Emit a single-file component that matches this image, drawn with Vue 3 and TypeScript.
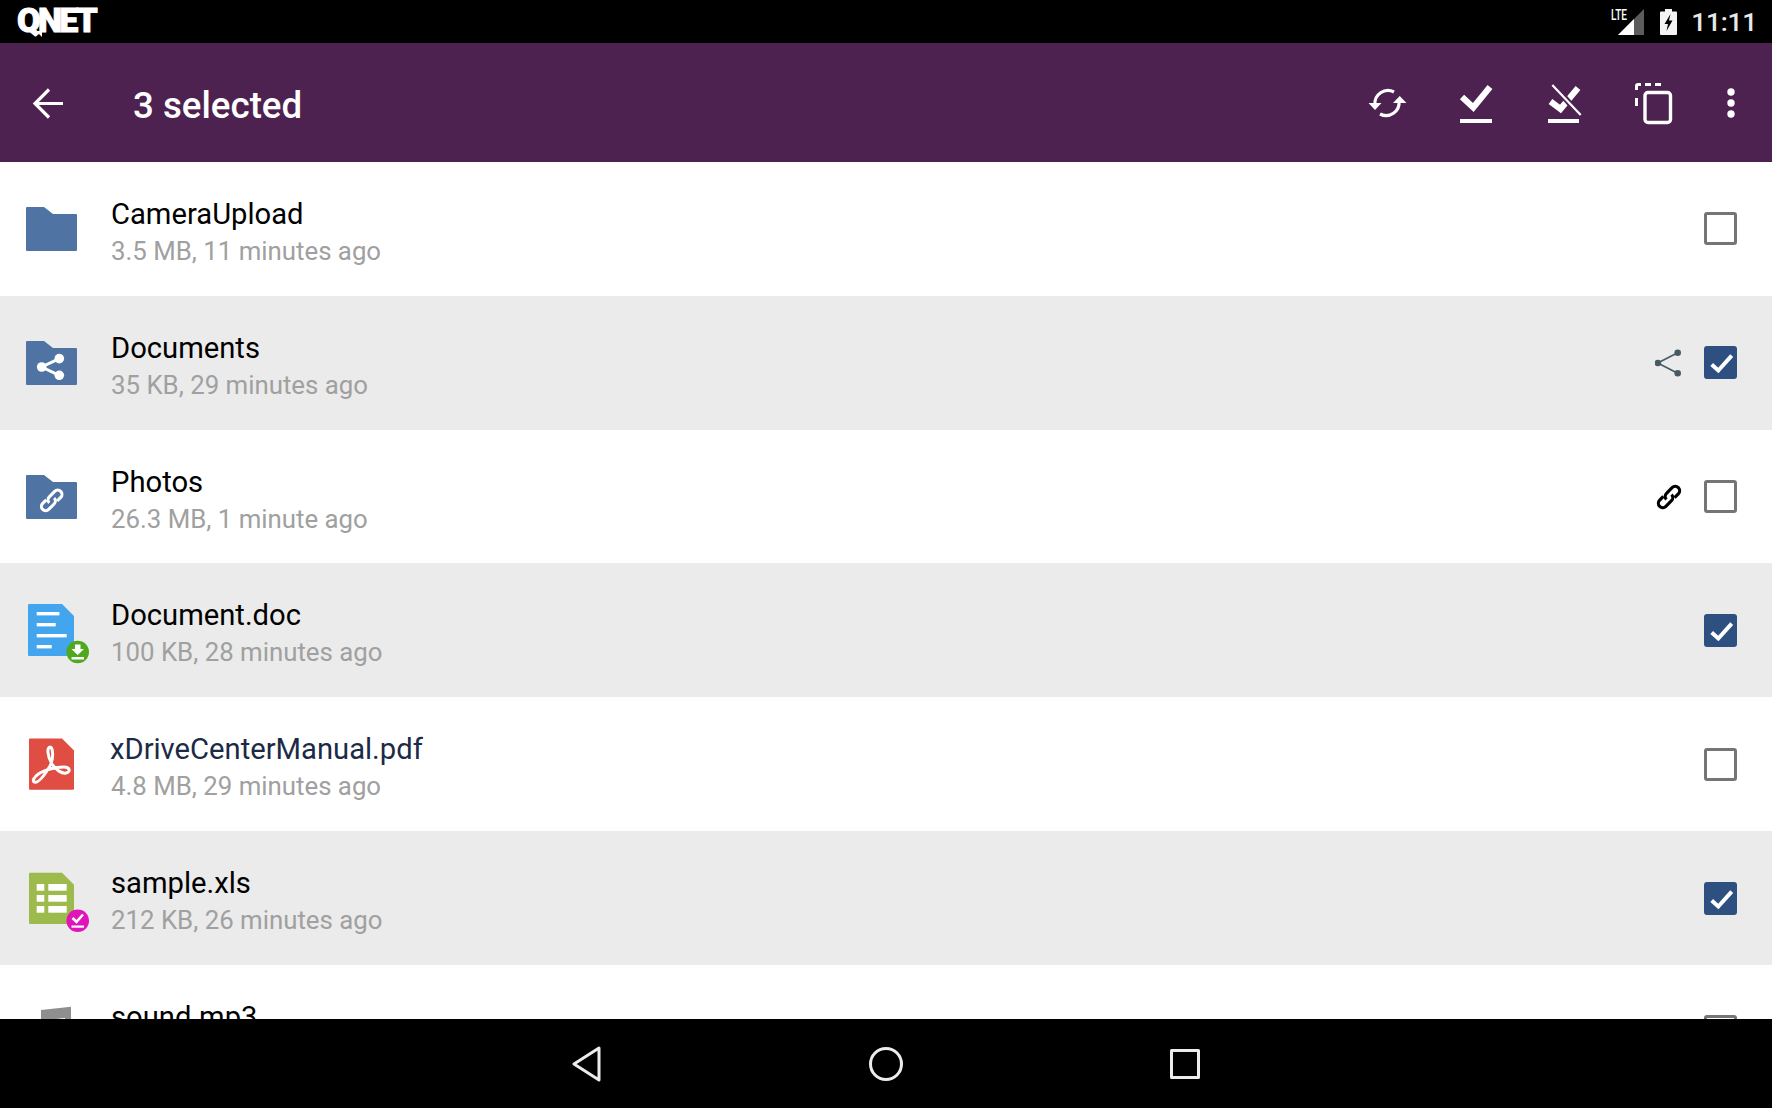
<template>
  <div class="screen">
    <header class="status-bar">
      <div class="logo">QNET</div>
      <div class="status-right">
        <div class="signal">
          <span class="lte">LTE</span>
          <svg width="26" height="26" viewBox="0 0 26 26">
            <polygon points="26,0 26,26 0,26" fill="#5c5c5c" />
            <polygon points="16,10 16,26 0,26" fill="#fff" />
          </svg>
        </div>
        <svg class="battery" width="17" height="26" viewBox="0 0 17 26">
          <path d="M5 0h7v2.5h4a1 1 0 0 1 1 1V25a1 1 0 0 1-1 1H1a1 1 0 0 1-1-1V3.500a1 1 0 0 1 1-1h4z" fill="#f4f4f4" />
          <path d="M10.500 5 4.500 15h3.500l-1.500 7 6-10.500H9z" fill="#000" />
        </svg>
        <span class="clock">11:11</span>
      </div>
    </header>

    <div class="toolbar">
      <svg class="back" width="48" height="48" viewBox="0 0 48 48" fill="none" stroke="#fff" stroke-width="3.2">
        <path d="M10.500 24.500H39M25 10.500 11 24.500l14 14" />
      </svg>
      <h1 class="title">3 selected</h1>
      <div class="actions">
        <button class="action">
          <svg width="48" height="48" viewBox="0 0 48 48" fill="none" stroke="#fff" stroke-width="3.200">
            <path d="M12 26A13 13 0 0 1 31 13" />
            <path d="M36 22A13 13 0 0 1 17 35" />
            <polygon points="5.500,24 18.500,24 12,31" fill="#fff" stroke="none" />
            <polygon points="30,24 43.500,24 36.700,17" fill="#fff" stroke="none" />
          </svg>
        </button>
        <button class="action">
          <svg width="48" height="48" viewBox="0 0 48 48" fill="none">
            <polyline points="10,18 21.300,28.500 38,8" stroke="#fff" stroke-width="6.200" />
            <rect x="8" y="40" width="32" height="4" fill="#fff" />
          </svg>
        </button>
        <button class="action">
          <svg width="48" height="48" viewBox="0 0 48 48" fill="none">
            <polyline points="10.500,22.500 20.500,30 38,9" stroke="#fff" stroke-width="6.200" />
            <line x1="12.300" y1="5" x2="41" y2="37" stroke="#4d2150" stroke-width="6" />
            <line x1="12.300" y1="6" x2="40.700" y2="36" stroke="#fff" stroke-width="2.200" />
            <rect x="8" y="40" width="31" height="4" fill="#fff" />
          </svg>
        </button>
        <button class="action">
          <svg width="48" height="48" viewBox="0 0 48 48" fill="none">
            <rect x="16" y="13.500" width="25.500" height="30" rx="3" stroke="#fff" stroke-width="3.400" />
            <path d="M6 11V7a3 3 0 0 1 3-3h3v3H9v4zM16 4h6v3h-6zM26 4h6v3h-6zM6 19h3v8H6z" fill="#fff" />
          </svg>
        </button>
        <button class="action more">
          <svg width="10" height="32" viewBox="0 0 10 32" fill="#fff">
            <circle cx="5" cy="5" r="3.700" />
            <circle cx="5" cy="16" r="3.700" />
            <circle cx="5" cy="27" r="3.700" />
          </svg>
        </button>
      </div>
    </div>

    <main class="list">
      <div
        v-for="file in files"
        :key="file.name"
        class="row"
        :class="{ selected: file.checked }"
      >
        <svg class="file-icon" width="64" height="64" viewBox="0 0 64 64">
          <template v-if="file.icon.startsWith('folder')">
            <path d="M7 10h17l9 7h23a1 1 0 0 1 1 1v35a1 1 0 0 1-1 1H7a1 1 0 0 1-1-1V11a1 1 0 0 1 1-1z" fill="#4f74a3" />
            <g v-if="file.icon === 'folder-shared'">
              <path d="M39.300 27.600 21.700 36l17.600 8.300" fill="none" stroke="#fff" stroke-width="3" />
              <circle cx="39.300" cy="27.600" r="4.800" fill="#fff" />
              <circle cx="21.700" cy="36" r="4.800" fill="#fff" />
              <circle cx="39.300" cy="44.300" r="4.800" fill="#fff" />
            </g>
            <g v-if="file.icon === 'folder-link'" transform="translate(31.700 35.400) rotate(-45) scale(0.85)" fill="none" stroke="#fff" stroke-width="3.600">
              <path :d="linkLeft" />
              <path :d="linkRight" />
            </g>
          </template>

          <template v-else-if="file.icon === 'doc'">
            <path d="M9 6h33l12 12v39a1 1 0 0 1-1 1H9a1 1 0 0 1-1-1V7a1 1 0 0 1 1-1z" fill="#42a5ee" />
            <g fill="#fff">
              <rect x="16.700" y="14" width="22.700" height="3.400" />
              <rect x="16.700" y="25" width="19" height="3.400" />
              <rect x="16.700" y="36" width="30" height="3.400" />
              <rect x="16.700" y="47" width="15" height="3.400" />
            </g>
            <circle cx="57.700" cy="54" r="11.300" fill="#4fa81e" />
            <path d="M55 46.500h5.500v4.500h3.500l-6.300 6-6.200-6H55zM51.500 59h12.500v2.500H51.500z" fill="#fff" />
          </template>

          <template v-else-if="file.icon === 'pdf'">
            <path d="M10 6.400h32l12 12v38.300a1 1 0 0 1-1 1H10a1 1 0 0 1-1-1V7.400a1 1 0 0 1 1-1z" fill="#e04e43" />
            <path d="M14 50C18 52 24 44 30 34C34 26 33 15 30 15C27 15 27 24 32 32C36 38 42 42 46 41C51 40 50 35 44 35C36 35 22 38 16 44C13 47 13 49 14 50Z" fill="none" stroke="#fff" stroke-width="3" />
          </template>

          <template v-else-if="file.icon === 'xls'">
            <path d="M10 6.700h32l12 12V57a1 1 0 0 1-1 1H10a1 1 0 0 1-1-1V7.700a1 1 0 0 1 1-1z" fill="#9cbb4c" />
            <g fill="#fff">
              <rect x="16.700" y="18" width="7.600" height="6.700" />
              <rect x="28.300" y="18" width="18.400" height="6.700" />
              <rect x="16.700" y="29" width="7.600" height="6.700" />
              <rect x="28.300" y="29" width="18.400" height="6.700" />
              <rect x="16.700" y="40" width="7.600" height="6.700" />
              <rect x="28.300" y="40" width="18.400" height="6.700" />
            </g>
            <circle cx="57.700" cy="54.700" r="11.300" fill="#e014b8" />
            <polyline points="52.500,52 56.500,55.800 63,48.500" fill="none" stroke="#fff" stroke-width="2.600" />
            <rect x="51.500" y="59.500" width="12.500" height="2.200" fill="#fff" />
          </template>

          <path v-else d="M21 10 51 6.700V40h-6V18l-18 2v26h-6z" fill="#8e8e8e" />
        </svg>

        <div class="info">
          <div class="name" :class="{ pdf: file.icon === 'pdf' }">{{ file.name }}</div>
          <div class="meta">{{ file.meta }}</div>
        </div>

        <div class="row-end">
          <svg v-if="file.mark === 'share'" width="28" height="28" viewBox="0 0 28 28">
            <path d="M22.700 3.700 2.700 14l20 10.300" fill="none" stroke="#455a64" stroke-width="1.600" />
            <circle cx="22.700" cy="3.700" r="3.300" fill="#455a64" />
            <circle cx="2.900" cy="14" r="3.300" fill="#455a64" />
            <circle cx="22.700" cy="24.300" r="3.300" fill="#455a64" />
          </svg>
          <svg v-if="file.mark === 'link'" width="28" height="28" viewBox="0 0 28 28">
            <g transform="translate(14 14) rotate(-45) scale(0.88)" fill="none" stroke="#000" stroke-width="3.600">
              <path :d="linkLeft" />
              <path :d="linkRight" />
            </g>
          </svg>
          <span class="checkbox" :class="{ checked: file.checked }">
            <svg v-if="file.checked" width="33" height="33" viewBox="0 0 33 33">
              <polyline points="7.700,18.500 14.300,24.500 27.700,9.700" fill="none" stroke="#fff" stroke-width="4" />
            </svg>
          </span>
        </div>
      </div>
    </main>

    <nav class="nav-bar">
      <div class="nav-item">
        <svg width="32" height="36" viewBox="0 0 32 36" fill="none" stroke="#ececec" stroke-width="3" stroke-linejoin="round">
          <polygon points="28,2 28,34 3,18" />
        </svg>
      </div>
      <div class="nav-item">
        <svg width="36" height="36" viewBox="0 0 36 36" fill="none" stroke="#ececec" stroke-width="3">
          <circle cx="18" cy="18" r="15.500" />
        </svg>
      </div>
      <div class="nav-item">
        <svg width="32" height="32" viewBox="0 0 32 32" fill="none" stroke="#ececec" stroke-width="3" stroke-linejoin="round">
          <rect x="2.500" y="2.500" width="27" height="27" />
        </svg>
      </div>
    </nav>
  </div>
</template>

<script setup lang="ts">
type FileRow = {
  name: string
  meta: string
  icon: string
  checked: boolean
  mark?: 'share' | 'link'
}

// two hooked links of the chain icon, drawn around 0,0
const linkLeft = 'M4 0A5 5 0 0 1-1 5H-10A5 5 0 0 1-10-5H-4'
const linkRight = 'M-4 0A5 5 0 0 1 1-5H10A5 5 0 0 1 10 5H4'

const files: FileRow[] = [
  { name: 'CameraUpload', meta: '3.5 MB, 11 minutes ago', icon: 'folder', checked: false },
  { name: 'Documents', meta: '35 KB, 29 minutes ago', icon: 'folder-shared', checked: true, mark: 'share' },
  { name: 'Photos', meta: '26.3 MB, 1 minute ago', icon: 'folder-link', checked: false, mark: 'link' },
  { name: 'Document.doc', meta: '100 KB, 28 minutes ago', icon: 'doc', checked: true },
  { name: 'xDriveCenterManual.pdf', meta: '4.8 MB, 29 minutes ago', icon: 'pdf', checked: false },
  { name: 'sample.xls', meta: '212 KB, 26 minutes ago', icon: 'xls', checked: true },
  { name: 'sound.mp3', meta: '2.1 MB, 30 minutes ago', icon: 'audio', checked: false },
]
</script>

<style scoped>
.screen {
  height: 100vh;
  display: flex;
  flex-direction: column;
  overflow: hidden;
  font-family: Roboto, "Liberation Sans", sans-serif;
  background: #fff;
}

.status-bar {
  height: 43px;
  flex: none;
  background: #000;
  display: flex;
  align-items: center;
  justify-content: space-between;
  padding: 0 15px 0 17px;
}
.logo {
  position: relative;
  color: #fff;
  font-size: 34px;
  line-height: 1;
  font-weight: 900;
  letter-spacing: -2.5px;
  -webkit-text-stroke: 1px #fff;
  margin-top: -4px;
}
.logo::after {
  content: '';
  position: absolute;
  left: 19px;
  bottom: 0;
  border-top: 6px solid #fff;
  border-left: 6px solid transparent;
}
.status-right {
  display: flex;
  align-items: center;
}
.signal {
  position: relative;
  width: 26px;
  height: 26px;
  margin-right: 16px;
}
.lte {
  position: absolute;
  left: -7px;
  top: -1px;
  color: #fff;
  font-size: 14px;
  line-height: 14px;
  font-weight: 500;
  transform: scaleX(0.72);
  transform-origin: left top;
}
.signal svg,
.battery {
  display: block;
}
.clock {
  margin-left: 14px;
  color: #e8e8e8;
  font-size: 26.500px;
  font-weight: 500;
  letter-spacing: -0.3px;
}

.toolbar {
  height: 119px;
  flex: none;
  background: #4d2150;
  display: flex;
  align-items: center;
  padding-left: 24px;
  padding-right: 7px;
}
.back {
  flex: none;
}
.title {
  margin: 6px 0 0 61px;
  flex: 1;
  color: #fff;
  font-size: 36.700px;
  font-weight: 500;
}
.actions {
  display: flex;
  align-items: center;
}
.action {
  width: 88.600px;
  height: 88px;
  padding: 0;
  background: none;
  border: 0;
  display: flex;
  align-items: center;
  justify-content: center;
}
.action.more {
  width: 68px;
}

.list {
  flex: 1;
  min-height: 0;
  overflow: hidden;
}
.row {
  height: 133.830px;
  display: flex;
  align-items: center;
  padding-right: 35px;
  box-sizing: border-box;
  background: #fff;
}
.row.selected {
  background: #ebebeb;
}
.file-icon {
  flex: none;
  margin-left: 20px;
  overflow: visible;
}
.info {
  margin-left: 27px;
  padding-top: 8px;
  flex: 1;
  min-width: 0;
}
.name {
  color: #000;
  font-size: 29.200px;
  line-height: 36px;
}
.name.pdf {
  color: #1b2a45;
  margin-left: -1px;
}
.meta {
  color: #a0a0a0;
  font-size: 25.800px;
  line-height: 38px;
}
.row-end {
  display: flex;
  align-items: center;
  gap: 21px;
}
.row-end svg {
  display: block;
}
.checkbox {
  width: 33px;
  height: 33px;
  box-sizing: border-box;
  border: 3px solid #757575;
  border-radius: 3px;
  position: relative;
}
.checkbox.checked {
  border: 0;
  background: #2d5080;
}

.nav-bar {
  height: 89px;
  flex: none;
  background: #000;
  display: flex;
  align-items: center;
  justify-content: center;
}
.nav-item {
  width: 299px;
  display: flex;
  justify-content: center;
}
</style>
